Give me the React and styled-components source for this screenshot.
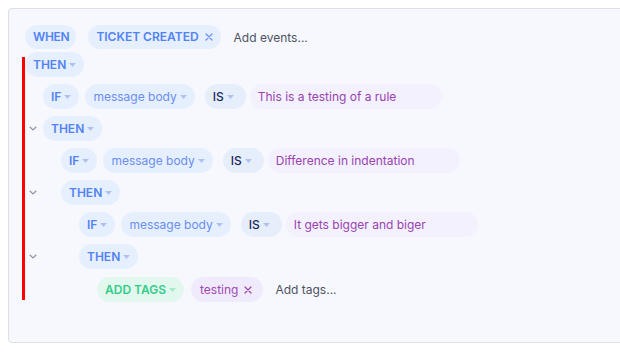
import React from "react";
import styled, { createGlobalStyle, css } from "styled-components";

const Global = createGlobalStyle`
  html, body { margin: 0; padding: 0; background: #ffffff; overflow: hidden; }
  body { padding: 8px; font-family: Inter, "Noto Sans", sans-serif; }
`;

const Panel = styled.div`
  width: 720px;
  height: 335px;
  box-sizing: border-box;
  background: #f7f8fd;
  border: 1px solid #dde0e6;
  border-radius: 4px;
  padding: 16px;
`;

const Row = styled.div`
  display: flex;
  align-items: center;
  height: ${(p) => p.$h || 25}px;
  margin-top: ${(p) => p.$mt || 0}px;
`;

const Gutter = styled.div`
  flex: none;
  width: ${(p) => p.$w}px;
  display: flex;
  align-items: center;
  overflow: hidden;
`;

const Block = styled.div`
  position: relative;
  margin-top: 3px;
  &::before {
    content: "";
    position: absolute;
    left: -3px;
    top: 5px;
    bottom: 2px;
    width: 3px;
    background: #ff0000;
  }
`;

const tones = {
  blue: css`background: #e6effd; color: #5282f3; font-weight: 600;`,
  field: css`background: #e6effd; color: #6a8ef2; font-weight: 400;`,
  op: css`background: #e6eefb; color: #1b2a5e; font-weight: 500; min-width: 41px;`,
  green: css`background: #e2f8ee; color: #35cc8a; font-weight: 600;`,
  tag: css`background: #efebfc; color: #a04ab2; font-weight: 400; padding: 0 11px 0 9px;`,
};

const Pill = styled.span`
  flex: none;
  display: inline-flex;
  align-items: center;
  box-sizing: border-box;
  height: ${(p) => p.$h || 25}px;
  padding: 0 8px;
  border-radius: 13px;
  font-size: 12px;
  line-height: 1;
  white-space: nowrap;
  margin-right: ${(p) => p.$mr || 0}px;
  ${(p) => tones[p.$tone || "blue"]}
`;

const WhenPill = styled(Pill)`
  padding: 0 7px 0 8px;
  letter-spacing: -0.3px;
`;

const Value = styled.span`
  flex: none;
  display: inline-flex;
  align-items: center;
  box-sizing: border-box;
  width: 192px;
  height: 25px;
  padding: 0 8px;
  border-radius: 13px;
  background: #f2f1fd;
  color: #9a43b0;
  font-size: 12px;
  white-space: nowrap;
`;

const Placeholder = styled.span`
  font-size: 12px;
  color: #4d5363;
`;

const CaretSvg = styled.svg`
  margin-left: 3px;
  flex: none;
`;

const Caret = ({ color = "#b2c2ef" }) => (
  <CaretSvg width="7" height="4" viewBox="0 0 7 4">
    <path d="M0 0 L7 0 L3.5 4 Z" fill={color} />
  </CaretSvg>
);

const CloseSvg = styled.svg`
  margin-left: 6px;
  flex: none;
`;

const Close = ({ color }) => (
  <CloseSvg width="8" height="8" viewBox="0 0 8 8">
    <path d="M1 1 L7 7 M7 1 L1 7" stroke={color} strokeWidth="1.3" strokeLinecap="round" />
  </CloseSvg>
);

const ChevronSvg = styled.svg`
  margin-left: 4px;
  flex: none;
`;

const Chevron = () => (
  <ChevronSvg width="8" height="5" viewBox="0 0 8 5">
    <path d="M0.7 0.8 L4 4 L7.3 0.8" fill="none" stroke="#8f96a8" strokeWidth="1.2" />
  </ChevronSvg>
);

const ThenRow = ({ level, chevron, mt }) => (
  <Row $mt={mt}>
    <Gutter $w={level * 18}>{chevron && <Chevron />}</Gutter>
    <Pill $tone="blue">
      THEN
      <Caret />
    </Pill>
  </Row>
);

const IfRow = ({ level, value }) => (
  <Row $mt={7}>
    <Gutter $w={level * 18} />
    <Pill $tone="blue" $mr={6}>
      IF
      <Caret />
    </Pill>
    <Pill $tone="field" $mr={10}>
      message body
      <Caret />
    </Pill>
    <Pill $tone="op" $mr={4}>
      IS
      <Caret />
    </Pill>
    <Value>{value}</Value>
  </Row>
);

export default function App() {
  return (
    <>
      <Global />
      <Panel>
        <Row $h={24}>
          <WhenPill $tone="blue" $h={24} $mr={12}>WHEN</WhenPill>
          <Pill $tone="blue" $h={24} $mr={13}>
            TICKET CREATED
            <Close color="#6f93f3" />
          </Pill>
          <Placeholder>Add events...</Placeholder>
        </Row>
        <Block>
          <ThenRow level={0} />
          <IfRow level={1} value="This is a testing of a rule" />
          <ThenRow level={1} chevron mt={7} />
          <IfRow level={2} value="Difference in indentation" />
          <ThenRow level={2} chevron mt={7} />
          <IfRow level={3} value="It gets bigger and biger" />
          <ThenRow level={3} chevron mt={7} />
          <Row $mt={8}>
            <Gutter $w={4 * 18} />
            <Pill $tone="green" $mr={7}>
              ADD TAGS
              <Caret color="#a7e8c9" />
            </Pill>
            <Pill $tone="tag" $mr={12}>
              testing
              <Close color="#a04ab2" />
            </Pill>
            <Placeholder>Add tags...</Placeholder>
          </Row>
        </Block>
      </Panel>
    </>
  );
}
